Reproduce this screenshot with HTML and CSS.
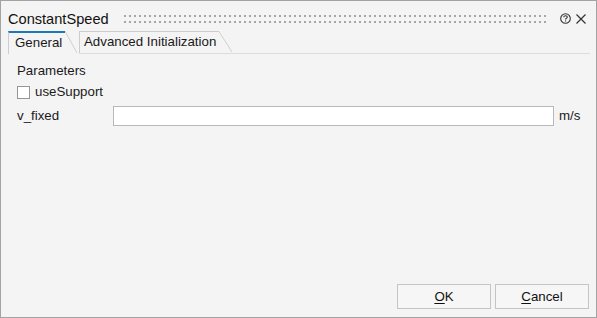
FILE: index.html
```html
<!DOCTYPE html>
<html>
<head>
<meta charset="utf-8">
<link rel="stylesheet" href="styles.css">
</head>
<body>
<div class="window">
  <div class="titlebar">
    <div class="title">ConstantSpeed</div>
    <div class="grip"></div>
    <svg class="help" width="11" height="11" viewBox="0 0 11 11">
      <circle cx="5.5" cy="5.5" r="4.8" fill="none" stroke="#333" stroke-width="1.1"/>
      <path d="M3.7 4.3 Q3.8 2.7 5.5 2.7 Q7.3 2.7 7.3 4.1 Q7.3 5 6.2 5.5 Q5.5 5.8 5.5 6.6" fill="none" stroke="#333" stroke-width="1.1"/>
      <rect x="5" y="7.4" width="1.1" height="1.1" fill="#333"/>
    </svg>
    <svg class="close" width="10" height="10" viewBox="0 0 10 10">
      <path d="M0.5 0.5 L9.5 9.5 M9.5 0.5 L0.5 9.5" stroke="#333" stroke-width="1.2"/>
    </svg>
  </div>
  <div class="tabbar">
    <div class="tab tab-active">
      <div class="tab-body">General</div>
      <svg class="slant" width="12" height="22" viewBox="0 0 12 22"><line x1="0" y1="0" x2="12" y2="22" stroke="#cfcfcf" stroke-width="1"/></svg>
    </div>
    <div class="tab tab-inactive">
      <div class="tab-body">Advanced Initialization</div>
      <svg class="slant" width="13" height="21" viewBox="0 0 13 21"><line x1="0" y1="0.5" x2="13" y2="21" stroke="#cfcfcf" stroke-width="1"/></svg>
    </div>
    <div class="tab-fill"></div>
  </div>
  <div class="content">
    <div class="section">Parameters</div>
    <div class="check-row">
      <span class="checkbox"></span>
      <span class="check-label">useSupport</span>
    </div>
    <div class="field-row">
      <span class="field-label">v_fixed</span>
      <span class="input"></span>
      <span class="unit">m/s</span>
    </div>
  </div>
  <div class="footer">
    <div class="btn"><u>O</u>K</div>
    <div class="btn"><u>C</u>ancel</div>
  </div>
</div>
</body>
</html>
```
FILE: styles.css
```css
html, body {
  margin: 0;
  padding: 0;
}
body {
  font-family: "Liberation Sans", Arial, sans-serif;
  font-size: 13.3px;
  color: #1a1a1a;
}
.window {
  width: 597px;
  height: 318px;
  box-sizing: border-box;
  border: 1px solid #a3a3a3;
  background: #f4f4f4;
  display: flex;
  flex-direction: column;
}
.titlebar {
  display: flex;
  align-items: flex-start;
  height: 30px;
  box-sizing: border-box;
  padding: 0 10px 0 7px;
}
.title {
  margin-top: 10px;
  font-size: 14.6px;
  line-height: 16px;
  color: #111;
}
.grip {
  flex: 1;
  height: 8px;
  margin: 14px 12px 0 15px;
  background-image: conic-gradient(at 2px 2px, transparent 75%, #a6a6a6 0);
  background-size: 5px 6px;
}
.help {
  margin-top: 12px;
  margin-right: 5px;
}
.close {
  margin-top: 13px;
}
.tabbar {
  display: flex;
  align-items: flex-end;
  height: 23px;
  padding-left: 7px;
}
.tab {
  display: flex;
  align-items: stretch;
}
.tab-body {
  box-sizing: border-box;
  border-left: 1px solid #cdcdcd;
  white-space: nowrap;
}
.tab-active {
  height: 23px;
  background: #f4f4f4;
  margin-right: 2px;
}
.tab-active .tab-body {
  width: 57px;
  border-top: 2px solid #1c79b1;
  padding-left: 6px;
  line-height: 20px;
}
.tab-inactive {
  height: 22px;
  border-bottom: 1px solid #dcdcdc;
}
.tab-inactive .tab-body {
  width: 140px;
  border-top: 1px solid #cdcdcd;
  padding-left: 4px;
  line-height: 20px;
}
.tab-fill {
  flex: 1;
  border-bottom: 1px solid #dcdcdc;
  margin-right: 6px;
}
.content {
  padding: 9px 0 0 15px;
  display: flex;
  flex-direction: column;
}
.section {
  line-height: 16px;
  padding-left: 1px;
}
.check-row {
  display: flex;
  align-items: center;
  height: 16px;
  margin-top: 5px;
}
.checkbox {
  width: 13px;
  height: 13px;
  box-sizing: border-box;
  border: 1px solid #969696;
  background: #fff;
  margin-left: 1px;
}
.check-label {
  margin-left: 5px;
  line-height: 16px;
}
.field-row {
  display: flex;
  align-items: center;
  height: 20px;
  margin-top: 6px;
}
.field-label {
  width: 97px;
  padding-left: 1px;
  box-sizing: border-box;
  line-height: 20px;
}
.input {
  width: 441px;
  height: 20px;
  box-sizing: border-box;
  border: 1px solid #b9b9b9;
  background: #fff;
}
.unit {
  margin-left: 5px;
  line-height: 20px;
}
.footer {
  margin-top: auto;
  display: flex;
  justify-content: flex-end;
  gap: 4px;
  padding: 0 7px 8px 0;
}
.btn {
  width: 94px;
  height: 25px;
  box-sizing: border-box;
  border: 1px solid #c4c4c4;
  background: #f6f6f6;
  text-align: center;
  line-height: 23px;
  color: #111;
}
.btn u {
  text-decoration-thickness: 1px;
  text-underline-offset: 2px;
}
```
